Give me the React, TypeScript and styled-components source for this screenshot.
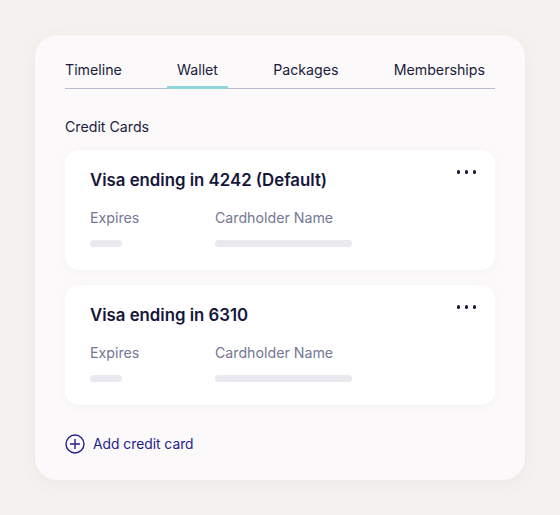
import styled, { createGlobalStyle } from 'styled-components'

const GlobalStyle = createGlobalStyle`
  body {
    margin: 0;
    background: #f4f1ef;
    font-family: Inter, "Noto Sans", sans-serif;
    -webkit-font-smoothing: antialiased;
  }
`

const Page = styled.div`
  padding: 35px;
`

const Panel = styled.div`
  width: 490px;
  height: 445px;
  box-sizing: border-box;
  padding: 25px 30px;
  background: #fbf9f9;
  border-radius: 22px;
  box-shadow: 0 4px 18px rgba(120, 100, 90, 0.06);
`

const TabRow = styled.div`
  display: flex;
  justify-content: space-between;
  border-bottom: 1px solid #b7b8d4;
`

const Tab = styled.div<{ $active?: boolean }>`
  padding: 0 10px 6px;
  font-size: 14.2px;
  line-height: 20px;
  color: #1b1c3e;
  margin-bottom: -1px;
  border-bottom: 3px solid ${(p) => (p.$active ? '#8fd6da' : 'transparent')};
  &:first-child {
    padding-left: 0;
  }
`

const Heading = styled.div`
  margin: 28px 0 13px;
  font-size: 14.2px;
  line-height: 20px;
  color: #1b1c3e;
`

const CardList = styled.div`
  display: flex;
  flex-direction: column;
  gap: 15px;
`

const Card = styled.div`
  position: relative;
  height: 120px;
  box-sizing: border-box;
  padding: 19px 25px;
  background: #ffffff;
  border-radius: 14px;
  box-shadow: 0 2px 10px rgba(90, 80, 110, 0.04);
`

const CardTitle = styled.div`
  font-size: 16.8px;
  font-weight: 600;
  line-height: 22px;
  color: #15163a;
`

const Fields = styled.div`
  display: grid;
  grid-template-columns: 125px auto;
  margin-top: 17px;
`

const Field = styled.div`
  display: flex;
  flex-direction: column;
  gap: 12px;
`

const Label = styled.div`
  font-size: 14.2px;
  line-height: 20px;
  color: #737895;
`

const Skeleton = styled.div<{ $w: number }>`
  width: ${(p) => p.$w}px;
  height: 7px;
  border-radius: 4px;
  background: #e9e9ef;
`

const MoreButton = styled.div`
  position: absolute;
  top: 20px;
  right: 19px;
  display: flex;
  gap: 4.5px;
`

const Dot = styled.span`
  width: 3.5px;
  height: 3.5px;
  border-radius: 50%;
  background: #15163a;
`

const AddLink = styled.div`
  display: flex;
  align-items: center;
  gap: 8px;
  margin-top: 29px;
  font-size: 13.8px;
  line-height: 20px;
  color: #25218c;
`

const cards = [
  { title: 'Visa ending in 4242 (Default)' },
  { title: 'Visa ending in 6310' },
]

export default function App() {
  return (
    <Page>
      <GlobalStyle />
      <Panel>
        <TabRow>
          <Tab>Timeline</Tab>
          <Tab $active>Wallet</Tab>
          <Tab>Packages</Tab>
          <Tab>Memberships</Tab>
        </TabRow>
        <Heading>Credit Cards</Heading>
        <CardList>
          {cards.map((c) => (
            <Card key={c.title}>
              <CardTitle>{c.title}</CardTitle>
              <Fields>
                <Field>
                  <Label>Expires</Label>
                  <Skeleton $w={32} />
                </Field>
                <Field>
                  <Label>Cardholder Name</Label>
                  <Skeleton $w={137} />
                </Field>
              </Fields>
              <MoreButton>
                <Dot />
                <Dot />
                <Dot />
              </MoreButton>
            </Card>
          ))}
        </CardList>
        <AddLink>
          <svg width="20" height="20" viewBox="0 0 20 20" fill="none" stroke="#25218c" strokeWidth="1.4">
            <circle cx="10" cy="10" r="9" />
            <path d="M10 5v10M5 10h10" />
          </svg>
          Add credit card
        </AddLink>
      </Panel>
    </Page>
  )
}
